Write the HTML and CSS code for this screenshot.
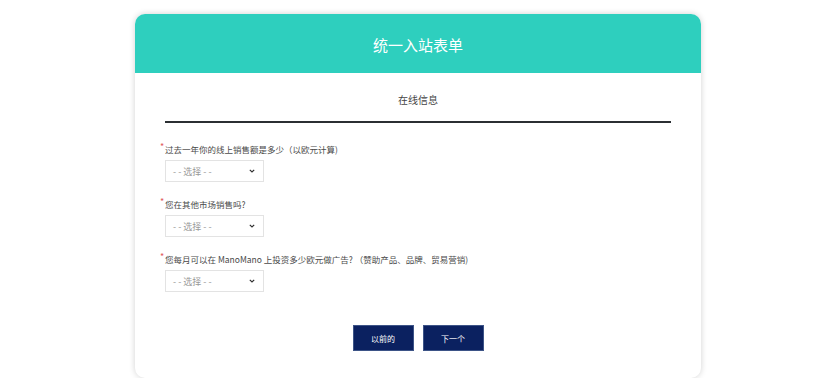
FILE: index.html
```html
<!DOCTYPE html>
<html lang="zh">
<head>
<meta charset="utf-8">
<link rel="stylesheet" href="styles.css">
</head>
<body>
<div class="card">
  <div class="header">统一入站表单</div>
  <div class="body">
    <div class="section">在线信息</div>
    <div class="rule"></div>
    <div class="field">
      <div class="label"><span class="req">*</span>过去一年你的线上销售额是多少（以欧元计算)</div>
      <div class="select"><span>- - 选择 - -</span><svg width="6" height="4" viewBox="0 0 6 4"><path d="M0.8 0.8 L3 3 L5.2 0.8" fill="none" stroke="#333" stroke-width="1.2"/></svg></div>
    </div>
    <div class="field">
      <div class="label"><span class="req">*</span>您在其他市场销售吗?</div>
      <div class="select"><span>- - 选择 - -</span><svg width="6" height="4" viewBox="0 0 6 4"><path d="M0.8 0.8 L3 3 L5.2 0.8" fill="none" stroke="#333" stroke-width="1.2"/></svg></div>
    </div>
    <div class="field">
      <div class="label"><span class="req">*</span>您每月可以在 ManoMano 上投资多少欧元做广告? （赞助产品、品牌、贸易营销)</div>
      <div class="select"><span>- - 选择 - -</span><svg width="6" height="4" viewBox="0 0 6 4"><path d="M0.8 0.8 L3 3 L5.2 0.8" fill="none" stroke="#333" stroke-width="1.2"/></svg></div>
    </div>
    <div class="actions">
      <button class="btn">以前的</button>
      <button class="btn">下一个</button>
    </div>
  </div>
</div>
</body>
</html>
```
FILE: styles.css
```css
html, body {
  margin: 0;
  padding: 0;
  background: #fff;
  font-family: "Noto Sans CJK SC", "Noto Sans", sans-serif;
}
.card {
  width: 566px;
  height: 364px;
  margin: 14px 0 0 135px;
  border-radius: 10px;
  background: #fff;
  box-shadow: 0 0 6px rgba(0,0,0,0.18);
  overflow: hidden;
}
.header {
  height: 59px;
  background: #2ecfbe;
  color: #fff;
  font-size: 15px;
  display: flex;
  align-items: center;
  justify-content: center;
  line-height: 1;
  padding-top: 1px;
  box-sizing: border-box;
}
.body {
  padding: 0 30px;
}
.section {
  text-align: center;
  font-size: 10px;
  color: #444;
  margin-top: 20px;
  line-height: 14px;
}
.rule {
  height: 2px;
  background: #2b2f33;
  margin-top: 14px;
}
.field {
  margin-top: 20px;
}
.field + .field {
  margin-top: 16px;
}
.label {
  font-size: 8.5px;
  line-height: 12px;
  color: #4a4a4a;
  margin-left: -5px;
  display: flex;
}
.req {
  color: #e05a5a;
  width: 5px;
  font-size: 9px;
  line-height: 8px;
}
.select {
  margin-top: 5px;
  width: 99px;
  height: 22px;
  box-sizing: border-box;
  border: 1px solid #e3e3e3;
  display: flex;
  align-items: center;
  justify-content: space-between;
  padding: 0 8px 0 7px;
  font-size: 9px;
  color: #999;
}
.actions {
  display: flex;
  justify-content: center;
  gap: 9px;
  margin-top: 33px;
}
.btn {
  width: 61px;
  height: 26px;
  background: #0b2160;
  border: 1px solid #3d5487;
  color: #fff;
  font-family: inherit;
  font-size: 8px;
  padding: 0;
  cursor: pointer;
}
```
